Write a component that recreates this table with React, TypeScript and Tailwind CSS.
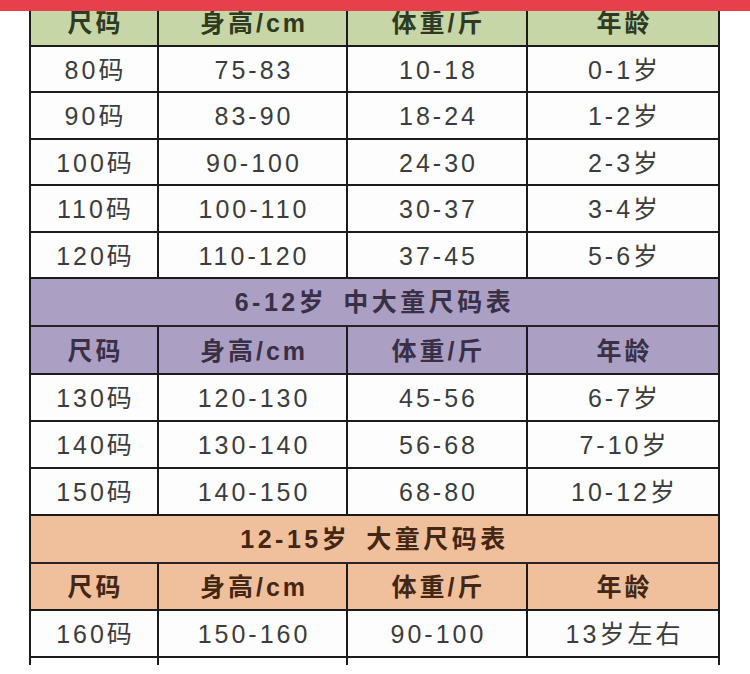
const FONT = "font-['Liberation_Sans','Noto_Sans_CJK_SC',sans-serif]";

type Row =
  | { kind: "head"; tone: "green" | "purple" | "orange"; h: string }
  | { kind: "title"; tone: "purple" | "orange"; left: string; right: string; h: string }
  | { kind: "data"; cells: string[]; h: string };

const HEAD = ["尺码", "身高/cm", "体重/斤", "年龄"];

const rows: Row[] = [
  { kind: "head", tone: "green", h: "h-[47px]" },
  { kind: "data", cells: ["80码", "75-83", "10-18", "0-1岁"], h: "h-[46px]" },
  { kind: "data", cells: ["90码", "83-90", "18-24", "1-2岁"], h: "h-[47px]" },
  { kind: "data", cells: ["100码", "90-100", "24-30", "2-3岁"], h: "h-[46px]" },
  { kind: "data", cells: ["110码", "100-110", "30-37", "3-4岁"], h: "h-[47px]" },
  { kind: "data", cells: ["120码", "110-120", "37-45", "5-6岁"], h: "h-[46px]" },
  { kind: "title", tone: "purple", left: "6-12岁", right: "中大童尺码表", h: "h-[48px]" },
  { kind: "head", tone: "purple", h: "h-[48px]" },
  { kind: "data", cells: ["130码", "120-130", "45-56", "6-7岁"], h: "h-[47px]" },
  { kind: "data", cells: ["140码", "130-140", "56-68", "7-10岁"], h: "h-[47px]" },
  { kind: "data", cells: ["150码", "140-150", "68-80", "10-12岁"], h: "h-[47px]" },
  { kind: "title", tone: "orange", left: "12-15岁", right: "大童尺码表", h: "h-[48px]" },
  { kind: "head", tone: "orange", h: "h-[47px]" },
  { kind: "data", cells: ["160码", "150-160", "90-100", "13岁左右"], h: "h-[47px]" },
];

const toneBg = {
  green: "bg-[#c6d6a6]",
  purple: "bg-[#ab9fc4]",
  orange: "bg-[#efc09b]",
};

const toneText = {
  green: "text-[#2e3a22]",
  purple: "text-[#3a3046]",
  orange: "text-[#432714]",
};

const COLS = "grid grid-cols-[128px_189px_180px_190px]";

function Cells({ items, className }: { items: string[]; className: string }) {
  return (
    <>
      {items.map((t, i) => (
        <div
          key={i}
          className={`flex items-center justify-center pt-[3px] ${i < 3 ? "border-r-2 border-[#1b1b1b]" : ""} ${className}`}
        >
          <span className="pl-[3px]">{t}</span>
        </div>
      ))}
    </>
  );
}

export default function App() {
  return (
    <div className={`relative w-[750px] h-[674px] overflow-hidden bg-white ${FONT}`}>
      <div className="ml-[29px] w-[691px] border-x-2 border-[#1b1b1b]">
        {rows.map((row, idx) => {
          if (row.kind === "title") {
            return (
              <div
                key={idx}
                className={`flex items-center justify-center pt-[2px] border-b-2 border-[#2a2226] ${row.h} ${toneBg[row.tone]} ${toneText[row.tone]} text-[25px] font-bold tracking-[3.5px]`}
              >
                <span>{row.left}</span>
                <span className="ml-[16px]">{row.right}</span>
              </div>
            );
          }
          if (row.kind === "head") {
            return (
              <div key={idx} className={`${COLS} border-b-2 border-[#1b1b1b] ${row.h} ${toneBg[row.tone]}`}>
                <Cells items={HEAD} className={`text-[25px] font-bold tracking-[3px] ${toneText[row.tone]}`} />
              </div>
            );
          }
          return (
            <div key={idx} className={`${COLS} border-b-2 border-[#1b1b1b] ${row.h} bg-[#fdfdfd]`}>
              <Cells items={row.cells} className="text-[25px] tracking-[3px] text-[#3c3c3c]" />
            </div>
          );
        })}
        <div className={`${COLS} h-[7px] bg-white`}>
          <div className="border-r-2 border-[#1b1b1b]" />
          <div className="border-r-2 border-[#1b1b1b]" />
          <div />
          <div />
        </div>
      </div>
      {/* red bar laid over the top of the screenshot */}
      <div className="absolute top-0 left-0 right-0 h-[11px] bg-[#e8404b]" />
    </div>
  );
}
